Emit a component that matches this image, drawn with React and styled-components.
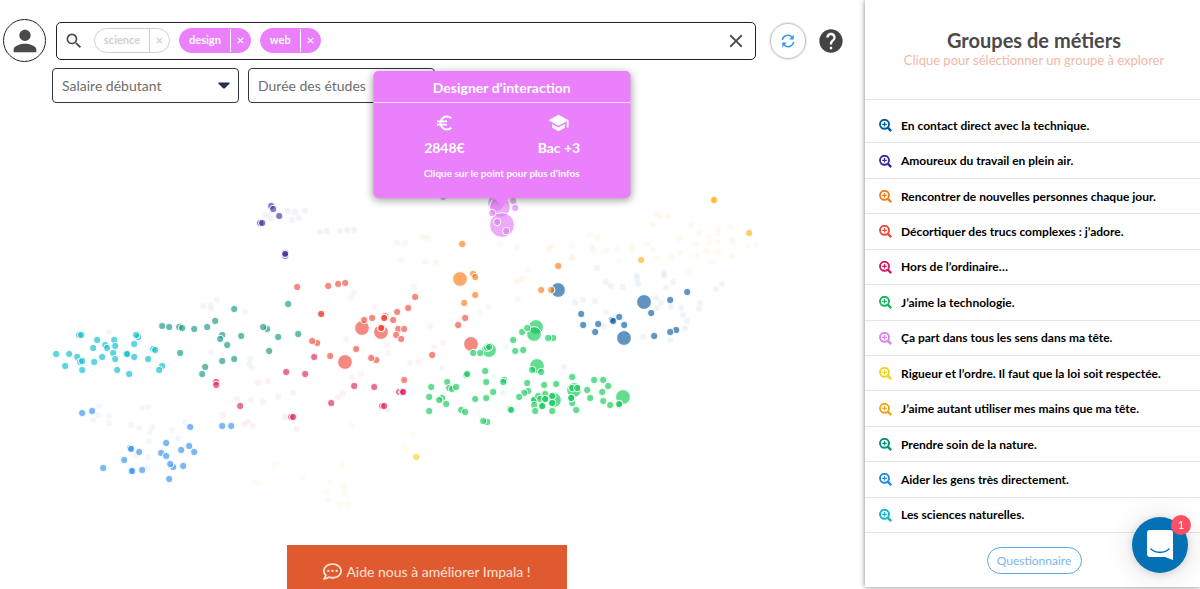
import React from "react";
import styled, { createGlobalStyle } from "styled-components";
import { MdPerson, MdSearch, MdClose, MdEuroSymbol, MdSchool, MdHelp } from "react-icons/md";
import { FaRegCommentDots } from "react-icons/fa";

const GlobalStyle = createGlobalStyle`
  * { box-sizing: border-box; }
  body {
    margin: 0;
    background: #fff;
    color: #4a4a4a;
    font-family: Lato, "Open Sans", sans-serif;
    font-size: 14px;
  }
  button, input, select { font: inherit; color: inherit; }
  button { padding: 0; border: 0; background: none; cursor: pointer; }
`;

const Page = styled.div`
  display: flex;
  min-height: 100vh;
`;

const Main = styled.main`
  flex: 1;
  min-width: 0;
  display: flex;
  flex-direction: column;
`;

const Toolbar = styled.header`
  display: flex;
  align-items: center;
  padding: 19px 20px 0 3px;
`;

const Avatar = styled.button`
  display: grid;
  place-items: center;
  width: 43px;
  height: 43px;
  margin-right: 10px;
  border: 1px solid #222;
  border-radius: 50%;
  color: #4a4a4a;
`;

const SearchBox = styled.form`
  flex: 1;
  min-width: 0;
  display: flex;
  align-items: center;
  gap: 9px;
  height: 38px;
  padding: 0 8px 0 7px;
  border: 1px solid #222;
  border-radius: 5px;
  svg { flex: none; }
`;

const SearchInput = styled.input`
  flex: 1;
  min-width: 0;
  border: 0;
  outline: 0;
  background: none;
`;

const Chip = styled.span`
  display: flex;
  height: 25px;
  margin-left: ${(p) => (p.$first ? "1px" : "0")};
  overflow: hidden;
  border: 1px solid ${(p) => (p.$on ? "#ea80fc" : "#d0d0d0")};
  border-radius: 13px;
  background: ${(p) => (p.$on ? "#ea80fc" : "#fff")};
  color: ${(p) => (p.$on ? "#fff" : "#cfcfcf")};
  font-size: 11px;
  font-weight: 700;
  line-height: 22px;
`;

const ChipLabel = styled.span`
  padding: 0 9px;
`;

const ChipRemove = styled.button`
  display: grid;
  place-items: center;
  width: 20px;
  border-left: 1px solid ${(p) => (p.$on ? "#fff" : "#d0d0d0")};
`;

const ClearButton = styled.button`
  display: grid;
`;

const RefreshButton = styled.button`
  display: grid;
  place-items: center;
  width: 36px;
  height: 36px;
  margin: 0 11px 0 14px;
  border: 1px solid #c4c4c4;
  border-radius: 50%;
  box-shadow: 0 0 2px rgba(0, 0, 0, 0.3);
  color: #3d98f5;
`;

const HelpButton = styled.button`
  display: grid;
  color: #444;
`;

const Filters = styled.div`
  display: flex;
  gap: 9px;
  padding: 6px 0 0 52px;
`;

const Filter = styled.label`
  display: grid;
  align-items: center;
  width: 187px;
  height: 35px;
  border: 1px solid #2f3542;
  border-radius: 4px;
  > * { grid-area: 1 / 1; }
  svg {
    justify-self: end;
    margin-right: 8px;
    pointer-events: none;
  }
`;

const FilterSelect = styled.select`
  width: 100%;
  height: 100%;
  padding: 0 24px 0 9px;
  border: 0;
  background: none;
  appearance: none;
  color: #6e6e6e;
`;

const ChartArea = styled.div`
  position: relative;
`;

const Chart = styled.svg`
  display: block;
  width: 100%;
`;

const Tooltip = styled.div`
  position: absolute;
  left: 58%;
  bottom: 78.5%;
  width: 257px;
  transform: translateX(-50%);
  padding-bottom: 17px;
  border-radius: 5px;
  background: #ea80fc;
  box-shadow: 0 2px 8px rgba(0, 0, 0, 0.4);
  color: #fff;
  font-weight: 700;
  text-align: center;
  &::after {
    content: "";
    position: absolute;
    top: 100%;
    left: 50%;
    margin-left: -8px;
    border: 8px solid transparent;
    border-top-color: #ea80fc;
    border-bottom: 0;
  }
`;

const TooltipTitle = styled.h2`
  margin: 0;
  padding-top: 2px;
  border-bottom: 1px solid rgba(255, 255, 255, 0.8);
  font-size: 14px;
  line-height: 29px;
`;

const Facts = styled.div`
  display: grid;
  grid-template-columns: 1fr 1fr;
  padding: 9px 14px 0;
`;

const Fact = styled.div`
  display: flex;
  flex-direction: column;
  align-items: center;
  gap: 4px;
  line-height: 20px;
  svg { height: 22px; }
`;

const TooltipHint = styled.p`
  margin: 7px 0 0;
  font-size: 10px;
  line-height: 16px;
`;

const Footer = styled.footer`
  display: flex;
  justify-content: center;
  margin-top: auto;
  padding-right: 11px;
`;

const Feedback = styled.button`
  display: flex;
  align-items: center;
  justify-content: center;
  gap: 4px;
  width: 280px;
  height: 44px;
  padding-top: 8px;
  background: #e05a2f;
  color: #fbe3d8;
`;

const Panel = styled.aside`
  flex: 0 0 335px;
  display: flex;
  flex-direction: column;
  margin-bottom: 2px;
  background: #fff;
  box-shadow: 0 0 5px rgba(0, 0, 0, 0.5);
`;

const PanelHeader = styled.div`
  height: 100px;
  padding: 28px 0 0 3px;
  border-bottom: 1px solid #e4e4e4;
  text-align: center;
`;

const PanelTitle = styled.h1`
  margin: 0;
  font-size: 20px;
  font-weight: 700;
  line-height: 24px;
`;

const PanelHint = styled.p`
  margin: 0;
  color: #f2b8a6;
  font-size: 13px;
  line-height: 16px;
`;

const GroupList = styled.ul`
  flex: 1;
  display: flex;
  flex-direction: column;
  margin: 0;
  padding: 8px 0 0;
  list-style: none;
`;

const GroupItem = styled.li`
  flex: 1;
  display: flex;
  border-bottom: 1px solid #e4e4e4;
`;

const GroupButton = styled.button`
  flex: 1;
  display: flex;
  align-items: center;
  gap: 9px;
  padding: 1px 0 0 14px;
  color: #000;
  font-size: 12px;
  font-weight: 700;
  line-height: 16px;
  text-align: left;
`;

const PanelFooter = styled.div`
  display: flex;
  align-items: center;
  justify-content: center;
  height: 54px;
  padding-left: 3px;
`;

const SurveyButton = styled.button`
  width: 95px;
  height: 27px;
  border: 1px solid #5ea4e6;
  border-radius: 14px;
  color: #7ab6ee;
  font-size: 12px;
`;

const Messenger = styled.button`
  position: fixed;
  right: 12px;
  bottom: 16px;
  display: grid;
  place-items: center;
  width: 56px;
  height: 56px;
  border-radius: 50%;
  background: #0571b5;
  box-shadow: 0 1px 10px rgba(0, 0, 0, 0.15), 0 2px 32px rgba(0, 0, 0, 0.12);
`;

const Unread = styled.span`
  position: absolute;
  top: -2px;
  right: -3px;
  width: 20px;
  height: 20px;
  border-radius: 50%;
  background: #ff4f64;
  color: #fff;
  font-size: 12px;
  line-height: 20px;
`;

const groups = [
  { label: "En contact direct avec la technique.", color: "#01579b" },
  { label: "Amoureux du travail en plein air.", color: "#3f2b96" },
  { label: "Rencontrer de nouvelles personnes chaque jour.", color: "#f57c1f" },
  { label: "Décortiquer des trucs complexes : j’adore.", color: "#e84a3c" },
  { label: "Hors de l’ordinaire…", color: "#d81b60" },
  { label: "J’aime la technologie.", color: "#12b455" },
  { label: "Ça part dans tous les sens dans ma tête.", color: "#dd7fee" },
  { label: "Rigueur et l’ordre. Il faut que la loi soit respectée.", color: "#f5d316" },
  { label: "J’aime autant utiliser mes mains que ma tête.", color: "#f5a21b" },
  { label: "Prendre soin de la nature.", color: "#0b8f79" },
  { label: "Aider les gens très directement.", color: "#2389e3" },
  { label: "Les sciences naturelles.", color: "#12b3c8" },
];

/* Jobs of each group: "on" and "off" hold [x, y], "large" holds [x, y, radius]. */
const clusters = [
  {
    color: "#4527a0",
    on: [[271, 206], [273, 209], [279, 216], [260, 223], [262, 223], [285, 256], [285, 253], [285, 254]],
    off: [[266, 215], [271, 218], [288, 211], [295, 212], [292, 220], [299, 218], [305, 211], [320, 232], [327, 231], [340, 231], [347, 230], [354, 230]],
  },
  {
    color: "#0d9480",
    on: [[162, 326], [169, 327], [179, 327], [182, 328], [194, 329], [207, 327], [215, 321], [234, 309], [288, 304], [222, 335], [220, 339], [227, 345], [241, 336], [267, 329], [263, 327], [278, 337], [269, 351], [180, 353], [234, 359], [222, 361], [205, 367], [202, 374], [298, 334]],
    off: [[203, 306], [211, 305], [211, 309], [217, 300], [245, 312], [109, 332], [211, 352], [250, 359], [249, 364], [252, 368]],
  },
  {
    color: "#00bcc9",
    on: [[56, 354], [69, 354], [77, 357], [80, 362], [82, 361], [65, 366], [82, 370], [79, 335], [81, 335], [97, 340], [93, 348], [105, 345], [107, 348], [114, 340], [115, 346], [113, 353], [115, 359], [102, 357], [94, 362], [117, 370], [129, 374], [138, 337], [136, 335], [134, 344], [126, 354], [127, 354], [134, 357], [148, 359], [153, 349], [155, 350], [162, 366], [159, 370]],
    off: [],
  },
  {
    color: "#d81b60",
    on: [[216, 382], [216, 385], [286, 372], [240, 406], [291, 417], [293, 417], [314, 357], [305, 374], [354, 386], [374, 387], [331, 403], [382, 406], [384, 406], [399, 392], [402, 392], [403, 392]],
    off: [[258, 383], [268, 381], [293, 393], [251, 400], [263, 402], [237, 399], [223, 415], [248, 422], [244, 424], [253, 426], [278, 397], [297, 429], [285, 417], [343, 394], [338, 397], [388, 410]],
  },
  {
    color: "#2a8fee",
    on: [[82, 413], [92, 411], [190, 427], [222, 426], [231, 426], [166, 443], [130, 448], [131, 449], [139, 452], [124, 460], [103, 468], [131, 471], [132, 471], [142, 470], [161, 453], [166, 456], [181, 450], [189, 446], [194, 452], [173, 467], [170, 464], [183, 466], [169, 479]],
    off: [[99, 406], [98, 415], [109, 416], [109, 423], [93, 420], [142, 408], [148, 407], [131, 425], [139, 428], [150, 432], [152, 427], [149, 441], [172, 430], [185, 422], [178, 438], [148, 457], [136, 455], [148, 468]],
  },
  {
    color: "#ee4438",
    large: [[345, 362, 7], [362, 328, 7], [381, 332, 7], [471, 344, 7]],
    on: [[297, 287], [328, 286], [338, 284], [345, 283], [321, 314], [321, 314], [317, 343], [312, 341], [330, 356], [364, 320], [372, 318], [385, 316], [384, 318], [384, 318], [393, 320], [397, 312], [408, 308], [415, 297], [381, 328], [381, 328], [398, 329], [404, 329], [396, 335], [401, 339], [356, 349], [376, 360], [371, 358], [404, 380], [432, 355], [458, 325], [465, 318]],
    off: [[354, 292], [351, 297], [414, 287], [374, 307], [346, 339], [430, 326], [443, 343], [434, 347], [387, 345], [388, 353], [410, 363], [418, 362], [361, 374], [352, 377]],
  },
  {
    color: "#01579b",
    large: [[558, 290, 7], [644, 302, 7], [624, 338, 7]],
    on: [[581, 314], [583, 325], [598, 324], [595, 332], [612, 320], [613, 321], [619, 317], [624, 325], [651, 313], [670, 300], [687, 292], [654, 336], [676, 330], [670, 332]],
    off: [[597, 268], [606, 282], [611, 286], [623, 287], [637, 275], [637, 279], [638, 284], [664, 273], [664, 276], [666, 288], [673, 282], [575, 302], [583, 300], [595, 301], [606, 312], [656, 298], [661, 303], [657, 308], [671, 307], [681, 308], [683, 315], [687, 321], [685, 328], [670, 340], [643, 337], [700, 303], [699, 309], [716, 289], [722, 284], [604, 326], [564, 367]],
  },
  {
    color: "#f9760f",
    large: [[460, 279, 7]],
    on: [[462, 244], [473, 274], [475, 277], [475, 295], [464, 303], [558, 266], [541, 290], [551, 290]],
    off: [[397, 243], [405, 243], [423, 237], [428, 238], [401, 260], [425, 262], [436, 262], [517, 247], [500, 244], [517, 282], [522, 279], [528, 270], [518, 299], [480, 312], [488, 307], [592, 247], [549, 249], [572, 257]],
  },
  {
    color: "#fbb014",
    on: [[713, 200], [714, 200], [749, 233], [641, 260]],
    off: [[657, 214], [660, 217], [668, 216], [653, 224], [590, 235], [598, 238], [552, 246], [572, 245], [594, 251], [606, 251], [617, 249], [632, 246], [632, 251], [572, 259], [619, 261], [647, 244], [653, 249], [691, 225], [699, 233], [679, 239], [680, 253], [695, 244], [706, 251], [709, 237], [709, 243], [718, 228], [718, 233], [718, 242], [718, 252], [730, 227], [732, 240], [733, 243], [732, 256], [748, 246], [756, 245], [697, 256], [713, 262], [689, 272], [672, 257], [657, 258]],
  },
  {
    color: "#f5d316",
    on: [[416, 457]],
    off: [[351, 425], [413, 434], [405, 448], [342, 465], [303, 477], [330, 482], [343, 487], [327, 492], [345, 493], [328, 500], [340, 505], [347, 504], [275, 465], [255, 483], [260, 482]],
  },
  {
    color: "#08c853",
    large: [[489, 350, 7], [536, 327, 7], [534, 334, 7], [537, 366, 7], [554, 400, 7], [574, 390, 7], [623, 397, 7]],
    on: [[473, 353], [480, 353], [487, 348], [489, 347], [513, 340], [522, 332], [527, 328], [553, 338], [548, 338], [515, 351], [523, 350], [541, 372], [532, 370], [466, 375], [467, 374], [485, 371], [447, 382], [431, 387], [449, 388], [452, 389], [456, 387], [429, 397], [442, 398], [439, 400], [446, 404], [429, 411], [461, 410], [465, 412], [486, 382], [504, 380], [503, 382], [493, 392], [475, 399], [486, 398], [487, 422], [483, 421], [510, 409], [511, 410], [527, 383], [544, 385], [556, 384], [528, 391], [524, 393], [519, 397], [534, 400], [534, 400], [538, 396], [545, 394], [540, 399], [545, 399], [545, 399], [534, 405], [542, 406], [542, 406], [552, 396], [552, 403], [535, 411], [552, 411], [572, 377], [572, 388], [577, 388], [572, 403], [571, 398], [571, 398], [576, 410], [587, 390], [590, 398], [594, 380], [603, 380], [608, 386], [602, 392], [603, 401], [610, 405], [619, 405], [619, 404]],
    off: [[506, 347], [442, 368], [494, 377], [503, 393]],
  },
  {
    color: "#e07af2",
    large: [[496, 203, 8], [500, 207, 10], [502, 225, 12]],
    on: [[513, 201], [515, 208], [497, 222], [506, 231], [443, 197], [492, 213]],
    off: [],
  },
];

function Dots({ color, large = [], on, off }) {
  return (
    <g fill={color} stroke="#fff">
      {off.map(([x, y], i) => (
        <circle key={`o${i}`} cx={x} cy={y} r="3.5" opacity="0.06" />
      ))}
      {large.map(([x, y, r], i) => (
        <circle key={`l${i}`} cx={x} cy={y} r={r + 0.4} fillOpacity="0.63" />
      ))}
      {on.map(([x, y], i) => (
        <circle key={`s${i}`} cx={x + 0.2} cy={y} r="3.7" fillOpacity="0.63" />
      ))}
    </g>
  );
}

function ZoomIcon({ color }) {
  return (
    <svg width="13" height="13" viewBox="0 0 13 13" fill="none" stroke={color} aria-hidden="true">
      <circle cx="5.5" cy="5.3" r="4.5" strokeWidth="1.9" />
      <path d="M5.5 3v4.6M3.2 5.3h4.6" strokeWidth="1.2" />
      <path d="M8.8 8.6l3.4 3.5" strokeWidth="2.4" />
    </svg>
  );
}

function RefreshIcon() {
  return (
    <svg width="14" height="14" viewBox="0 0 14 14" aria-hidden="true">
      <path
        d="M1.300 6A5.600 5.600 0 0 1 11 3.200M12.700 8A5.600 5.600 0 0 1 3 10.800"
        fill="none"
        stroke="currentColor"
        strokeWidth="1.500"
      />
      <path d="M12.800.8v4.700H8.100zM1.200 13.200V8.500h4.700z" fill="currentColor" />
    </svg>
  );
}

function Cross() {
  return (
    <svg width="7" height="7" viewBox="0 0 7 7" stroke="currentColor" strokeWidth="1.2" aria-hidden="true">
      <path d="M.8.8l5.4 5.4M6.2.8L.8 6.2" />
    </svg>
  );
}

function Tag({ label, on, first }) {
  return (
    <Chip $on={on} $first={first}>
      <ChipLabel>{label}</ChipLabel>
      <ChipRemove type="button" $on={on} aria-label={`Retirer ${label}`}>
        <Cross />
      </ChipRemove>
    </Chip>
  );
}

function FilterField({ label }) {
  return (
    <Filter>
      <FilterSelect aria-label={label}>
        <option>{label}</option>
      </FilterSelect>
      <svg width="12" height="7" viewBox="0 0 12 7" fill="#22304a" aria-hidden="true">
        <path d="M1 .5h10c.7 0 1 .7.5 1.200L6.800 6.200c-.5.5-1.100.5-1.600 0L.5 1.700C0 1.200.3.500 1 .5z" />
      </svg>
    </Filter>
  );
}

export default function App() {
  return (
    <Page>
      <GlobalStyle />
      <Main>
        <Toolbar>
          <Avatar aria-label="Profil">
            <MdPerson size={34} />
          </Avatar>
          <SearchBox>
            <MdSearch size={20} />
            <Tag label="science" first />
            <Tag label="design" on />
            <Tag label="web" on />
            <SearchInput aria-label="Recherche" />
            <ClearButton type="button" aria-label="Effacer">
              <MdClose size={22} />
            </ClearButton>
          </SearchBox>
          <RefreshButton aria-label="Actualiser">
            <RefreshIcon />
          </RefreshButton>
          <HelpButton aria-label="Aide">
            <MdHelp size={28} />
          </HelpButton>
        </Toolbar>
        <Filters>
          <FilterField label="Salaire débutant" />
          <FilterField label="Durée des études" />
        </Filters>
        <ChartArea>
          <Chart viewBox="0 103 865 442" role="img" aria-label="Carte des métiers">
            {clusters.map((c) => (
              <Dots key={c.color} {...c} />
            ))}
          </Chart>
          <Tooltip>
            <TooltipTitle>Designer d’interaction</TooltipTitle>
            <Facts>
              <Fact>
                <MdEuroSymbol size={20} />
                2848€
              </Fact>
              <Fact>
                <MdSchool size={22} />
                Bac +3
              </Fact>
            </Facts>
            <TooltipHint>Clique sur le point pour plus d’infos</TooltipHint>
          </Tooltip>
        </ChartArea>
        <Footer>
          <Feedback>
            <FaRegCommentDots size={19} />
            Aide nous à améliorer Impala !
          </Feedback>
        </Footer>
      </Main>
      <Panel>
        <PanelHeader>
          <PanelTitle>Groupes de métiers</PanelTitle>
          <PanelHint>Clique pour sélectionner un groupe à explorer</PanelHint>
        </PanelHeader>
        <GroupList>
          {groups.map((g) => (
            <GroupItem key={g.label}>
              <GroupButton>
                <ZoomIcon color={g.color} />
                {g.label}
              </GroupButton>
            </GroupItem>
          ))}
        </GroupList>
        <PanelFooter>
          <SurveyButton>Questionnaire</SurveyButton>
        </PanelFooter>
      </Panel>
      <Messenger aria-label="Ouvrir la messagerie">
        <svg width="28" height="32" viewBox="0 0 28 32" aria-hidden="true">
          <path d="M4 1h20a3 3 0 0 1 3 3v27l-8-3H4a3 3 0 0 1-3-3V4a3 3 0 0 1 3-3z" fill="#fff" />
          <path d="M5 20c5 4.500 13 4.500 18 0" fill="none" stroke="#0571b5" strokeWidth="1.600" strokeLinecap="round" />
        </svg>
        <Unread>1</Unread>
      </Messenger>
    </Page>
  );
}
